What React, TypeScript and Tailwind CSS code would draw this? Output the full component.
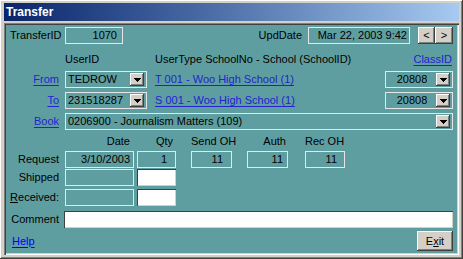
const raised =
  "bg-[#d4d0c8] shadow-[inset_-1px_-1px_#404040,inset_1px_1px_#ffffff,inset_-2px_-2px_#808080]";
const sunkenWhite =
  "bg-white shadow-[inset_1px_1px_#404040,inset_-1px_-1px_#d4d0c8]";
const link = "text-[#2323d2] underline underline-offset-[2px]";

function DropBtn() {
  return (
    <div className={`${raised} ml-auto flex h-[13px] w-[14px] shrink-0 items-center justify-center`}>
      <svg width="7" height="4" viewBox="0 0 7 4" shapeRendering="crispEdges">
        <path d="M0 0h7v1H0zM1 1h5v1H1zM2 2h3v1H2zM3 3h1v1H3z" fill="#000" />
      </svg>
    </div>
  );
}

function Select({ value, className = "" }: { value: string; className?: string }) {
  return (
    <div className={`flex h-[17px] items-center border border-[#e6e6e6] pr-[2px] ${className}`}>
      <span className="truncate pl-[2px]">{value}</span>
      <DropBtn />
    </div>
  );
}

function Field({ value = "", className = "" }: { value?: string; className?: string }) {
  return (
    <div className={`flex h-[17px] shrink-0 items-center justify-end border border-[#e6e6e6] ${className}`}>
      {value}
    </div>
  );
}

function Label({ children }: { children: React.ReactNode }) {
  return <div className="w-[53px] shrink-0 text-right">{children}</div>;
}

export default function App() {
  return (
    <div className="flex h-[259px] w-[463px] flex-col bg-[#d4d0c8] px-[4px] pt-[3px] pb-[4px] font-['Liberation_Sans',Arial,sans-serif] text-[11px] leading-[13px] text-black shadow-[inset_-1px_-1px_#404040,inset_1px_1px_#ffffff,inset_-2px_-2px_#808080]">
      <div className="flex h-[18px] shrink-0 items-center bg-linear-to-r from-[#0a246a] to-[#a6caf0] pl-[2px] text-[12px] font-bold text-white">
        Transfer
      </div>
      <div className="mt-[2px] flex flex-1 flex-col bg-[#5f9ea0] pt-[4px] pr-[6px] pl-[2px] shadow-[inset_1px_1px_#808080,inset_2px_2px_#404040,inset_-1px_-1px_#ffffff,inset_-2px_-2px_#d4d0c8]">
        {/* id / date */}
        <div className="flex h-[17px] items-center">
          <div className="w-[59px] shrink-0 pl-[4px]">TransferID</div>
          <Field value="1070" className="w-[58px] pr-[5px]" />
          <div className="ml-auto">UpdDate</div>
          <Field value="Mar 22, 2003 9:42" className="ml-[6px] w-[102px] pr-[2px]" />
          <div className="ml-[8px] flex">
            <div className={`${raised} flex h-[17px] w-[17px] items-center justify-center`}>&lt;</div>
            <div className={`${raised} flex h-[17px] w-[18px] items-center justify-center`}>&gt;</div>
          </div>
        </div>

        <div className="mt-[9px] flex h-[13px] items-center">
          <div className="w-[59px] shrink-0" />
          <div className="w-[90px] shrink-0">UserID</div>
          <div>UserType SchoolNo - School (SchoolID)</div>
          <div className={`ml-auto mr-px ${link}`}>ClassID</div>
        </div>

        <div className="mt-[5px] flex h-[17px] items-center">
          <Label><span className={link}>From</span></Label>
          <Select value="TEDROW" className="ml-[6px] w-[82px]" />
          <span className={`ml-[8px] ${link}`}>T 001 - Woo High School (1)</span>
          <Select value="20808" className="ml-auto w-[68px] [&>span]:ml-auto" />
        </div>

        <div className="mt-[4px] flex h-[17px] items-center">
          <Label><span className={link}>To</span></Label>
          <Select value="231518287" className="ml-[6px] w-[82px]" />
          <span className={`ml-[8px] ${link}`}>S 001 - Woo High School (1)</span>
          <Select value="20808" className="ml-auto w-[68px] [&>span]:ml-auto" />
        </div>

        <div className="mt-[4px] flex h-[17px] items-center">
          <Label><span className={link}>Book</span></Label>
          <Select value="0206900 - Journalism Matters (109)" className="ml-[6px] flex-1" />
        </div>

        {/* quantities */}
        <div className="mt-[5px] flex h-[13px] items-center">
          <div className="w-[59px] shrink-0" />
          <div className="w-[69px] shrink-0 pr-[4px] text-right">Date</div>
          <div className="ml-[3px] w-[39px] shrink-0 pr-[3px] text-right">Qty</div>
          <div className="ml-[15px] w-[41px] shrink-0 pr-[1px] text-right whitespace-nowrap">Send OH</div>
          <div className="ml-[15px] w-[41px] shrink-0 pr-[2px] text-right">Auth</div>
          <div className="ml-[17px] w-[40px] shrink-0 pr-[3px] text-right whitespace-nowrap">Rec OH</div>
        </div>

        <div className="mt-[3px] flex h-[17px] items-center">
          <Label>Request</Label>
          <Field value="3/10/2003" className="ml-[6px] w-[69px] pr-[3px]" />
          <Field value="1" className="ml-[3px] w-[39px] pr-[8px]" />
          <Field value="11" className="ml-[15px] w-[41px] pr-[8px]" />
          <Field value="11" className="ml-[15px] w-[41px] pr-[4px]" />
          <Field value="11" className="ml-[17px] w-[40px] pr-[7px]" />
        </div>

        <div className="mt-[1px] flex h-[17px] items-center">
          <Label>Shipped</Label>
          <Field className="ml-[6px] w-[69px]" />
          <div className={`${sunkenWhite} ml-[3px] h-[17px] w-[39px]`} />
        </div>

        <div className="mt-[3px] flex h-[17px] items-center">
          <Label><span className="underline">R</span>eceived:</Label>
          <Field className="ml-[6px] w-[69px]" />
          <div className={`${sunkenWhite} ml-[3px] h-[17px] w-[39px]`} />
        </div>

        <div className="mt-[5px] flex h-[17px] items-center">
          <Label>Comment</Label>
          <div className={`${sunkenWhite} ml-[5px] h-[17px] flex-1`} />
        </div>

        <div className="mt-[3px] flex h-[20px] items-center">
          <span className="pl-[6px] text-[#0000ff] underline underline-offset-[2px]">Help</span>
          <div className={`${raised} ml-auto flex h-[20px] w-[36px] items-center justify-center`}>
            E<span className="underline">x</span>it
          </div>
        </div>
      </div>
    </div>
  );
}
